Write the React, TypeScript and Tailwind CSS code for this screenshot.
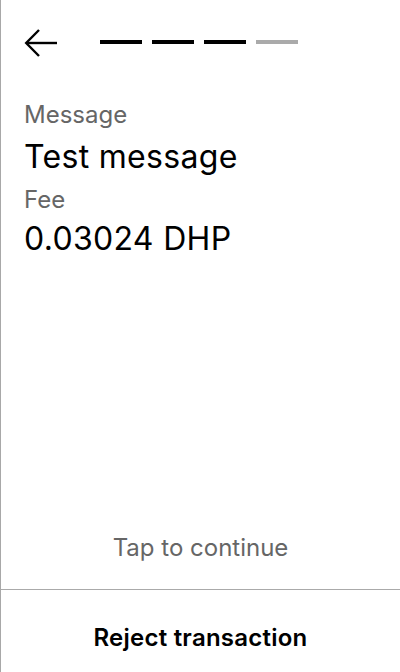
import React from "react";

export default function App() {
  return (
    <div
      className="w-[400px] h-[672px] flex flex-col bg-white border-l border-[#a8a8a8] text-black"
      style={{ fontFamily: "Inter, 'Noto Sans', sans-serif" }}
    >
      <div className="h-[86px] flex items-center pl-[23px] shrink-0">
        <svg width="36" height="30" viewBox="0 0 36 30" fill="none" className="shrink-0">
          <path d="M33 15H3" stroke="black" strokeWidth="2.4" />
          <path d="M15 2L2.2 15L15 28" stroke="black" strokeWidth="2.4" strokeLinejoin="miter" />
        </svg>
        <div className="flex gap-[10px] ml-[40px] -mt-[3px]">
          <div className="w-[42px] h-[4px] bg-black" />
          <div className="w-[42px] h-[4px] bg-black" />
          <div className="w-[42px] h-[4px] bg-black" />
          <div className="w-[42px] h-[4px] bg-[#aaaaaa]" />
        </div>
      </div>
      <div className="flex-1 px-[23px] pt-[15px]">
        <div className="text-[24px] leading-[28px] text-[#666666]">Message</div>
        <div className="text-[32px] leading-[36px] tracking-[0.01em] mt-[10px]">Test message</div>
        <div className="text-[24px] leading-[28px] text-[#666666] mt-[11px]">Fee</div>
        <div className="text-[32px] leading-[36px] tracking-[0.01em] mt-[7px]">0.03024 DHP</div>
      </div>
      <div className="text-center text-[24px] leading-[28px] text-[#666666] pb-[27px]">
        Tap to continue
      </div>
      <div className="border-t border-[#aaaaaa] pt-[34px] pb-[20px] text-center text-[24px] leading-[28px] tracking-[0.01em] font-semibold">
        Reject transaction
      </div>
    </div>
  );
}
